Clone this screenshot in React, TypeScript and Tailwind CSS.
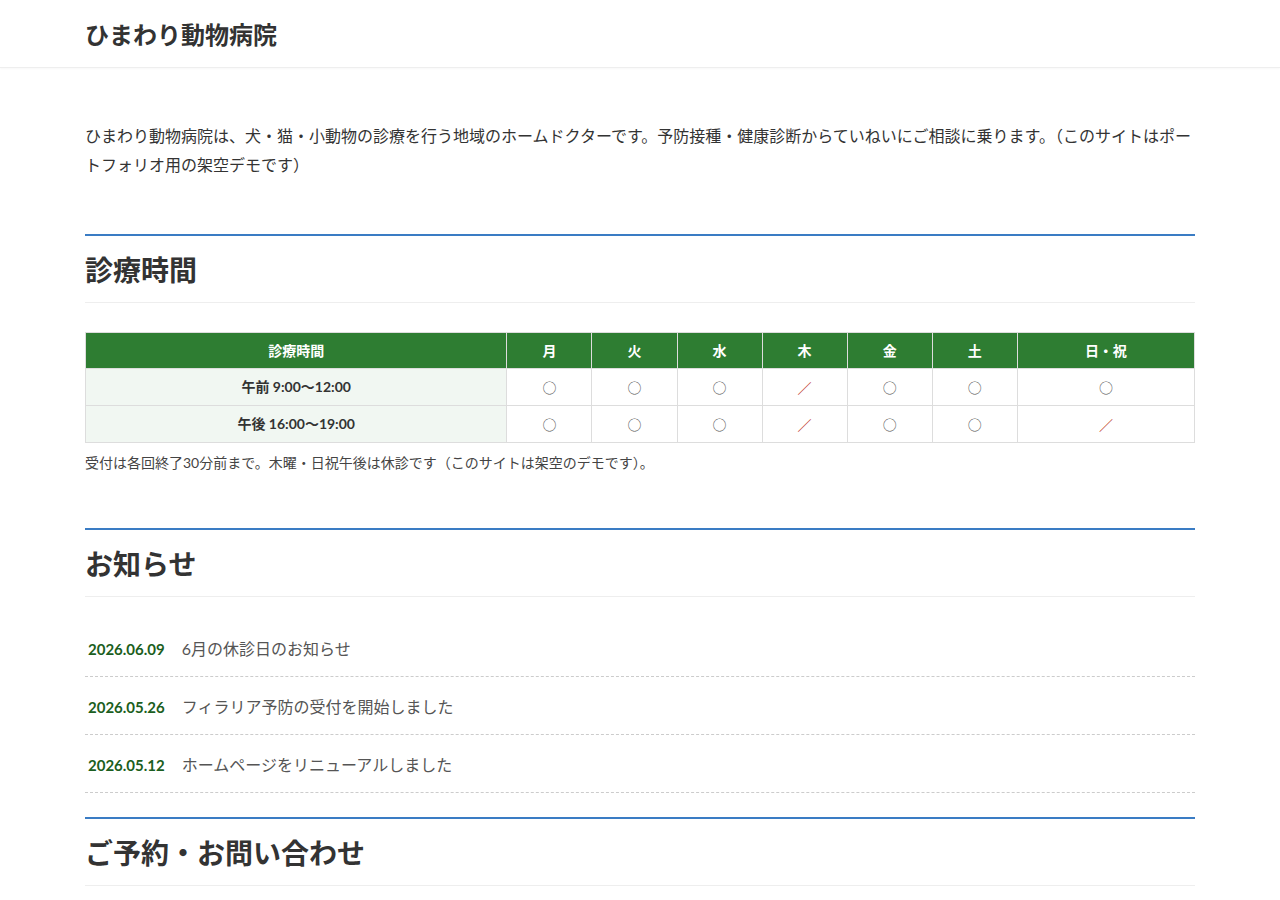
const days = ["月", "火", "水", "木", "金", "土", "日・祝"];
const rows = [
  { label: "午前 9:00〜12:00", marks: [1, 1, 1, 0, 1, 1, 1] },
  { label: "午後 16:00〜19:00", marks: [1, 1, 1, 0, 1, 1, 0] },
];
const news = [
  { date: "2026.06.09", title: "6月の休診日のお知らせ" },
  { date: "2026.05.26", title: "フィラリア予防の受付を開始しました" },
  { date: "2026.05.12", title: "ホームページをリニューアルしました" },
];

function SectionTitle({ children }: { children: React.ReactNode }) {
  return (
    <h2 className="border-t-2 border-[#3a7cc4] border-b border-b-[#eeeeee] pt-[15px] pb-[13px] text-[28px] font-bold leading-[38px] text-[#333]">
      {children}
    </h2>
  );
}

export default function App() {
  return (
    <div className="min-h-screen bg-white text-[#333]" style={{ fontFamily: 'Lato, "Noto Sans CJK JP", sans-serif' }}>
      <header className="h-[68px] border-b border-[#eeeeee] shadow-[0_1px_2px_rgba(0,0,0,0.03)]">
        <div className="mx-auto w-[1110px] pt-[18px] text-[24px] font-bold leading-[34px]">ひまわり動物病院</div>
      </header>
      <main className="mx-auto w-[1110px]">
        <p className="mt-[53px] text-[16px] leading-[29px]">
          ひまわり動物病院は、犬・猫・小動物の診療を行う地域のホームドクターです。予防接種・健康診断からていねいにご相談に乗ります。（このサイトはポートフォリオ用の架空デモです）
        </p>

        <section className="mt-[55px]">
          <SectionTitle>診療時間</SectionTitle>
          <table className="mt-[29px] w-full border-collapse text-[14px]">
            <thead>
              <tr className="h-[36px] bg-[#2e7d32] text-white">
                <th className="w-[421px] border border-[#dddddd] font-bold">診療時間</th>
                {days.map((d, i) => (
                  <th key={d} className={`border border-[#dddddd] font-bold ${i === 6 ? "w-[177px]" : "w-[85px]"}`}>{d}</th>
                ))}
              </tr>
            </thead>
            <tbody>
              {rows.map((r) => (
                <tr key={r.label} className="h-[37px]">
                  <td className="border border-[#dddddd] bg-[#f1f7f2] text-center font-bold leading-[20px]">{r.label}</td>
                  {r.marks.map((m, i) => (
                    <td key={i} className={`border border-[#dddddd] text-center leading-[20px] ${m ? "text-[#555]" : "text-[#c0392b]"}`}
                      style={{ fontFamily: '"Noto Sans CJK JP", sans-serif' }}>
                      {m ? "○" : "／"}
                    </td>
                  ))}
                </tr>
              ))}
            </tbody>
          </table>
          <p className="mt-[10px] text-[14px] leading-[20px] text-[#444]">受付は各回終了30分前まで。木曜・日祝午後は休診です（このサイトは架空のデモです）。</p>
        </section>

        <section className="mt-[55px]">
          <SectionTitle>お知らせ</SectionTitle>
          <ul className="mt-[22px]">
            {news.map((n) => (
              <li key={n.date} className="flex items-center gap-[17px] border-b border-dashed border-[#cccccc] px-[3px] pt-[18px] pb-[15px]">
                <span className="text-[15px] font-bold text-[#1b5e20]">{n.date}</span>
                <span className="text-[16px] text-[#555]">{n.title}</span>
              </li>
            ))}
          </ul>
        </section>

        <section className="mt-[24px]">
          <SectionTitle>ご予約・お問い合わせ</SectionTitle>
        </section>
      </main>
    </div>
  );
}
